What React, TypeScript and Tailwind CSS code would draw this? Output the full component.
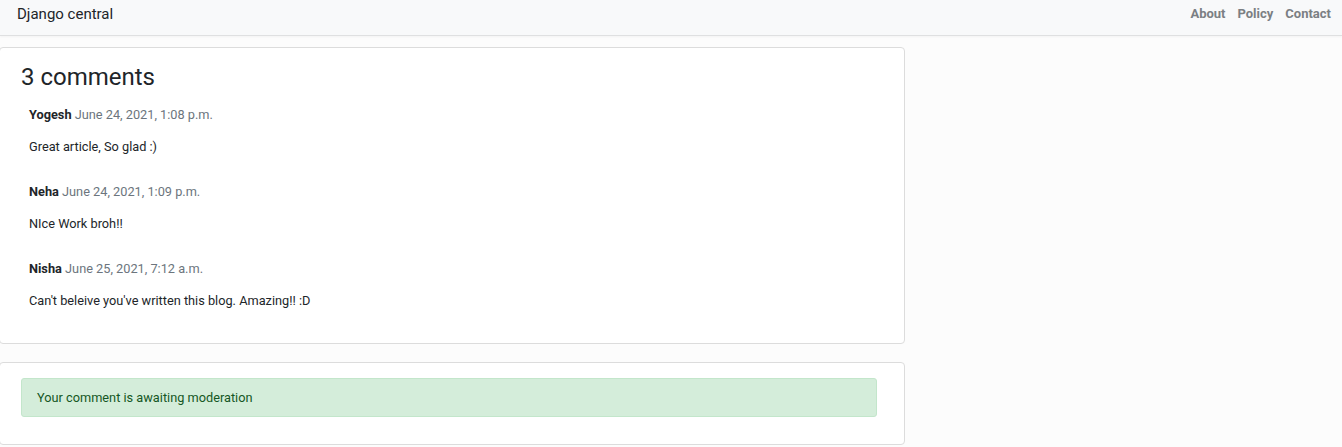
const comments = [
  { name: "Yogesh", date: "June 24, 2021, 1:08 p.m.", body: "Great article, So glad :)" },
  { name: "Neha", date: "June 24, 2021, 1:09 p.m.", body: "NIce Work broh!!" },
  { name: "Nisha", date: "June 25, 2021, 7:12 a.m.", body: "Can't beleive you've written this blog. Amazing!! :D" },
];

export default function App() {
  return (
    <div className="min-h-[447px] bg-[#fcfcfc] font-['Roboto',sans-serif] text-[#212529]">
      <nav className="flex h-[36px] items-start justify-between border-b border-[#dfe0e1] bg-[#f8f9fa] pl-[17px] pr-[11px] pt-[5px] shadow-[0_1px_2px_rgba(0,0,0,0.04)]">
        <span className="text-[15px] leading-[18px]">Django central</span>
        <div className="flex gap-[12px] text-[13px] font-bold leading-[18px] text-[#7b7f83]">
          <span>About</span>
          <span>Policy</span>
          <span>Contact</span>
        </div>
      </nav>

      <main className="flex flex-col gap-[18px] pt-[11px]">
        <section className="-ml-px w-[906px] rounded-[4px] border border-[#dcdcdc] bg-white pb-[32px] pl-[21px] pt-[14px]">
          <h2 className="text-[24px] leading-[30px]">3 comments</h2>
          <div className="mt-[13px] flex flex-col gap-[25px] pl-[8px] text-[12.75px] leading-[20px]">
            {comments.map((c) => (
              <div key={c.name} className="flex flex-col gap-[12px]">
                <p>
                  <span className="font-bold">{c.name}</span>{" "}
                  <span className="text-[#6c757d]">{c.date}</span>
                </p>
                <p>{c.body}</p>
              </div>
            ))}
          </div>
        </section>

        <section className="-ml-px w-[906px] rounded-[4px] border border-[#dcdcdc] bg-white pb-[27px] pl-[21px] pr-[27px] pt-[15px]">
          <div className="flex h-[39px] items-center rounded-[3px] border border-[#c3e6cb] bg-[#d4edda] px-[15px] text-[12.75px] text-[#155724]">
            Your comment is awaiting moderation
          </div>
        </section>
      </main>
    </div>
  );
}
